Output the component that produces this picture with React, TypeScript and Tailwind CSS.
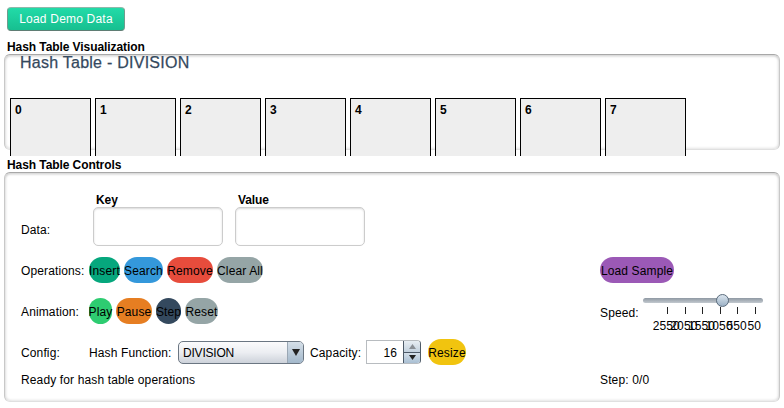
const cells = [0, 1, 2, 3, 4, 5, 6, 7]
const speedLabels = ["2550", "2050", "1550", "1050", "550", "50"]

function Pill({ label, className }: { label: string; className: string }) {
  return (
    <button className={`flex h-[26px] items-center justify-center whitespace-nowrap rounded-[13px] pt-px text-[12px] tracking-[0.13px] text-black ${className}`}>
      {label}
    </button>
  )
}

function Panel({ className, children }: { className: string; children: React.ReactNode }) {
  return (
    <div className={`rounded-[6px] border border-[#e0e0e0] border-t-[#a8a8a8] border-l-[#c8c8c8] border-r-[#c8c8c8] bg-white shadow-[inset_0_2px_2px_rgba(0,0,0,0.12),inset_2px_0_2px_rgba(0,0,0,0.05),inset_-2px_0_2px_rgba(0,0,0,0.05),inset_0_-2px_2px_rgba(0,0,0,0.05)] ${className}`}>
      {children}
    </div>
  )
}

function SpeedSlider() {
  return (
    <div className="-mt-[4px] w-[120px]">
      <div className="relative h-[13px]">
        <div className="absolute left-0 right-0 top-[4px] h-[5px] rounded-full bg-gradient-to-b from-[#8f99a3] to-[#c3c9cf]" />
        <div className="absolute left-[73px] top-0 h-[13px] w-[13px] rounded-full border border-[#5a6b7c] bg-gradient-to-b from-[#dbe5ee] to-[#9db2c6]" />
      </div>
      <div className="ml-[24px] flex h-[7px] gap-[16.6px]">
        {speedLabels.map((s) => (
          <div key={s} className="h-[7px] w-px bg-[#222]" />
        ))}
      </div>
      <div className="ml-[14.5px] mt-[5px] flex text-[12px] leading-[14px] text-black">
        {speedLabels.map((s) => (
          <div key={s} className="flex w-[17.6px] justify-center whitespace-nowrap">
            {s}
          </div>
        ))}
      </div>
    </div>
  )
}

export default function App() {
  return (
    <div className="h-[408px] w-[784px] overflow-hidden bg-white font-['Liberation_Sans',sans-serif] text-[12px] tracking-[0.13px] text-black">
      <div className="px-[7px] pt-[7px]">
        <button className="flex h-[24px] w-[118px] items-center justify-center rounded-[4px] border border-[#6f9c8e] border-t-[#8fb8aa] border-b-[#5f7d74] bg-gradient-to-b from-[#22dba8] to-[#17bf90] text-[12px] tracking-[0.2px] text-white">
          Load Demo Data
        </button>
      </div>

      <div className="mt-[8px] h-[15px] pl-[7px] pt-px text-[12px] font-bold leading-[15px] tracking-[-0.08px]">Hash Table Visualization</div>
      <div className="ml-[4px] h-[102px] w-[776px] overflow-hidden">
        <Panel className="h-[96px] w-[776px]">
          <div className="pl-[15px] text-[16px] leading-[16px] tracking-[0.25px] text-[#34495e] [-webkit-text-stroke:0.25px_#34495e]">Hash Table - DIVISION</div>
          <div className="ml-[5px] mt-[27px] flex gap-[4px]">
            {cells.map((c) => (
              <div key={c} className="h-[90px] w-[81px] shrink-0 border border-black bg-[#eeeeee] pl-[4px] pt-[4px] text-[12px] font-bold leading-[14px]">
                {c}
              </div>
            ))}
          </div>
        </Panel>
      </div>

      <div className="h-[16px] pl-[7px] pt-px text-[12px] font-bold leading-[16px] tracking-[-0.08px]">Hash Table Controls</div>
      <Panel className="ml-[4px] h-[230px] w-[776px] pl-[16px] pt-[20px]">
        <div className="flex">
          <div className="flex w-[72px] items-end pb-[7px]">Data:</div>
          <div className="flex gap-[12px]">
            <div className="w-[130px]">
              <div className="h-[14px] pl-[3px] font-bold leading-[14px] tracking-[-0.08px]">Key</div>
              <div className="h-[39px] rounded-[5px] border border-[#cccccc] bg-white shadow-[inset_0_1px_2px_rgba(0,0,0,0.15)]" />
            </div>
            <div className="w-[130px]">
              <div className="h-[14px] pl-[3px] font-bold leading-[14px] tracking-[-0.08px]">Value</div>
              <div className="h-[39px] rounded-[5px] border border-[#cccccc] bg-white shadow-[inset_0_1px_2px_rgba(0,0,0,0.15)]" />
            </div>
          </div>
        </div>

        <div className="mt-[11px] grid grid-cols-[579px_1fr] items-center">
          <div className="flex items-center">
            <div className="w-[68px] pt-px">Operations:</div>
            <div className="flex gap-[4px]">
              <Pill label="Insert" className="w-[31px] bg-[#06a77d]" />
              <Pill label="Search" className="w-[39px] bg-[#3498db]" />
              <Pill label="Remove" className="w-[46px] bg-[#e74c3c]" />
              <Pill label="Clear All" className="w-[46px] bg-[#95a5a6]" />
            </div>
          </div>
          <Pill label="Load Sample" className="w-[74px] bg-[#9b59b6]" />
        </div>

        <div className="mt-[15px] grid grid-cols-[579px_1fr] items-center">
          <div className="flex items-center">
            <div className="w-[68px] pt-px">Animation:</div>
            <div className="flex gap-[4px]">
              <Pill label="Play" className="w-[23px] bg-[#2ecc71]" />
              <Pill label="Pause" className="w-[36px] bg-[#e67e22]" />
              <Pill label="Step" className="w-[25px] bg-[#34495e]" />
              <Pill label="Reset" className="w-[33px] bg-[#95a5a6]" />
            </div>
          </div>
          <div className="flex h-[26px] items-start">
            <div className="mt-[6px] w-[43px]">Speed:</div>
            <SpeedSlider />
          </div>
        </div>

        <div className="mt-[15px] flex h-[26px] items-center">
          <div className="w-[68px] pt-px">Config:</div>
          <div className="w-[89px] pt-px">Hash Function:</div>
          <div className="flex h-[23px] w-[126px] items-stretch overflow-hidden rounded-[5px] border border-[#6b7682] bg-gradient-to-b from-[#fbfbfc] via-[#eceef2] to-[#cdd2da]">
            <div className="flex-1 pl-[4px] pt-px leading-[21px] tracking-[-0.2px]">DIVISION</div>
            <div className="flex w-[16px] items-center justify-center border-l border-[#9aa7b4] bg-gradient-to-b from-[#d5dfe8] to-[#a3b8cb]">
              <svg width="8" height="7" viewBox="0 0 8 7">
                <path d="M0 0H8L4 7Z" fill="#222" />
              </svg>
            </div>
          </div>
          <div className="ml-[6px] w-[56px] pt-px">Capacity:</div>
          <div className="flex h-[24px] w-[55px] overflow-hidden rounded-r-[4px] border border-[#b8bcc0] border-r-[#4d5a68]">
            <div className="flex-1 pr-[6px] pt-px text-right leading-[22px]">16</div>
            <div className="flex w-[17px] flex-col border-l border-[#4d5a68]">
              <div className="flex flex-1 items-center justify-center bg-gradient-to-b from-[#e8eef3] to-[#c3d1de]">
                <svg width="7" height="5" viewBox="0 0 7 5">
                  <path d="M3.5 0L7 5H0Z" fill="#8a8f95" />
                </svg>
              </div>
              <div className="flex flex-1 items-center justify-center border-t border-[#4d5a68] bg-gradient-to-b from-[#d5e0ea] to-[#a9bfd3]">
                <svg width="7" height="5" viewBox="0 0 7 5">
                  <path d="M0 0H7L3.5 5Z" fill="#222" />
                </svg>
              </div>
            </div>
          </div>
          <Pill label="Resize" className="ml-[7px] w-[38px] bg-[#f1c40f]" />
        </div>

        <div className="mt-[8px] grid grid-cols-[579px_1fr] leading-[14px]">
          <div>Ready for hash table operations</div>
          <div>Step: 0/0</div>
        </div>
      </Panel>
    </div>
  )
}
